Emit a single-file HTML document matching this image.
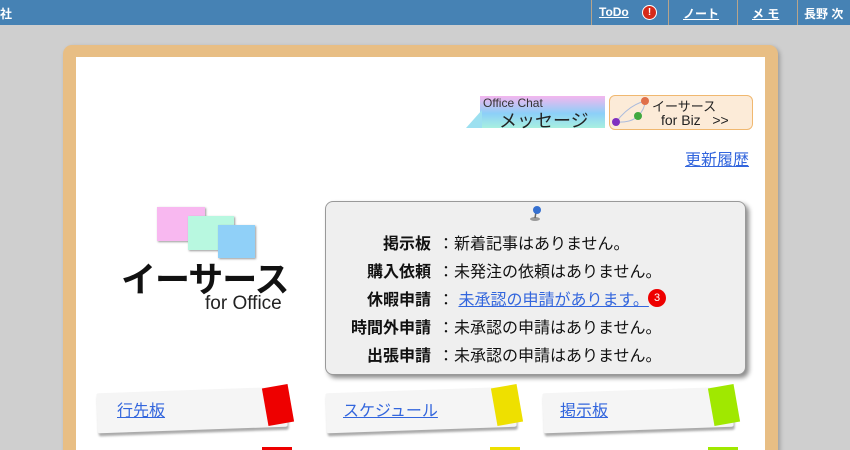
<!DOCTYPE html>
<html style="width:850px;height:450px;overflow:hidden"><head><meta charset="utf-8"><style>
*{margin:0;padding:0;box-sizing:border-box}
body{width:850px;height:450px;overflow:hidden;background:#cfcfcf;font-family:"Liberation Sans","Noto Sans CJK JP",sans-serif;position:relative}
.top{position:absolute;left:0;top:0;width:850px;height:25px;background:#4682b4;color:#fff;font-size:12px;font-weight:bold}
.top span{position:absolute;top:5px}
.sep{position:absolute;top:0;width:1px;height:25px;background:#b8a48a}
.frame{position:absolute;left:63px;top:45px;width:715px;height:420px;background:#e8be84;border-radius:9px;box-shadow:2px 2px 4px rgba(0,0,0,.25)}
.inner{position:absolute;left:76px;top:57px;width:689px;height:400px;background:#fff}
a{color:#3366dd;text-decoration:underline}
.panel{position:absolute;left:325px;top:201px;width:421px;height:174px;background:#efefef;border:1px solid #999;border-radius:8px;box-shadow:3px 3px 5px rgba(0,0,0,.45)}
.row{position:absolute;left:0;font-size:16px;color:#111;white-space:nowrap}
.row b{position:absolute;right:-105px;width:200px;text-align:right;font-weight:bold}
.tab{position:absolute;width:196px;height:44px}
.tab .b{position:absolute;left:0;top:4px;width:190px;height:40px;background:#f5f5f5;border-radius:2px;box-shadow:1px 3px 2px #aaa;transform:rotate(-2deg)}
.tab a{position:absolute;left:20px;top:11px;font-size:16px}
.tab .c{position:absolute;right:2px;top:0;width:26px;height:38px;transform:rotate(-10deg)}
</style></head><body>
<div class="top">
<span style="left:0">社</span>
<div class="sep" style="left:591px"></div>
<span style="left:599px;text-decoration:underline">ToDo</span>
<span style="left:642px;top:5px;width:15px;height:15px;border-radius:50%;background:#d52a1a;border:1px solid #fff;text-align:center;font-size:10px;line-height:13px">!</span>
<div class="sep" style="left:668px"></div>
<span style="left:683px;text-decoration:underline">ノート</span>
<div class="sep" style="left:737px"></div>
<span style="left:752px;text-decoration:underline">メ モ</span>
<div class="sep" style="left:797px"></div>
<span style="left:804px">長野 次</span>
</div>
<div class="frame"></div>
<div class="inner"></div>

<div style="position:absolute;left:480px;top:96px;width:125px;height:32px;background:linear-gradient(#f4b6ee,#8cd0f8 55%,#a8f0e0)"></div>
<div style="position:absolute;left:466px;top:110px;width:0;height:0;border-top:18px solid transparent;border-right:16px solid #9ce0f0"></div>
<div style="position:absolute;left:483px;top:96px;font-size:12px;color:#333">Office Chat</div>
<div style="position:absolute;left:499px;top:107px;font-size:18px;color:#222">メッセージ</div>
<div style="position:absolute;left:609px;top:95px;width:144px;height:35px;background:#fcebd8;border:1px solid #f0b870;border-radius:6px"></div>
<svg style="position:absolute;left:609px;top:95px" width="50" height="35"><path d="M7 27 Q20 10 36 6 M7 27 Q22 28 29 21 Q36 14 36 6" stroke="#aabbdd" fill="none"/><circle cx="36" cy="6" r="4" fill="#e0704a"/><circle cx="29" cy="21" r="4" fill="#40a840"/><circle cx="7" cy="27" r="4" fill="#8030c0"/></svg>
<div style="position:absolute;left:652px;top:96px;font-size:13px;color:#222">イーサース</div>
<div style="position:absolute;left:661px;top:112px;font-size:14px;color:#222">for Biz &nbsp;&nbsp;&gt;&gt;</div>
<a style="position:absolute;left:685px;top:146px;font-size:16px">更新履歴</a>

<div style="position:absolute;left:157px;top:207px;width:48px;height:34px;background:#f8b8f0;box-shadow:1px 1px 2px #999"></div>
<div style="position:absolute;left:188px;top:216px;width:46px;height:34px;background:#b8f8e0;box-shadow:1px 1px 2px #999"></div>
<div style="position:absolute;left:218px;top:225px;width:37px;height:33px;background:#90d0f8;box-shadow:1px 1px 2px #999"></div>
<div style="position:absolute;left:121px;top:252px;font-size:35px;font-weight:bold;color:#111;letter-spacing:-1px">イーサース</div>
<div style="position:absolute;left:205px;top:293px;font-size:19px;color:#222">for Office</div>

<div class="panel">
<svg style="position:absolute;left:203px;top:2px" width="14" height="18"><ellipse cx="6" cy="15" rx="5" ry="2" fill="#999"/><path d="M6 14 L7 8" stroke="#666" stroke-width="1.5"/><circle cx="8" cy="6" r="4" fill="#3570d0"/></svg>
<div class="row" style="top:28px;left:0"><b>掲示板</b></div>
<div class="row" style="top:56px"><b>購入依頼</b></div>
<div class="row" style="top:84px"><b>休暇申請</b></div>
<div class="row" style="top:112px"><b>時間外申請</b></div>
<div class="row" style="top:140px"><b>出張申請</b></div>
<div class="row" style="left:112px;top:28px">：新着記事はありません。</div>
<div class="row" style="left:112px;top:56px">：未発注の依頼はありません。</div>
<div class="row" style="left:112px;top:84px">：&nbsp;<a>未承認の申請があります。</a></div>
<div class="row" style="left:322px;top:87px;width:18px;height:18px;border-radius:50%;background:#e00;color:#fff;font-size:11px;text-align:center;line-height:18px">3</div>
<div class="row" style="left:112px;top:112px">：未承認の申請はありません。</div>
<div class="row" style="left:112px;top:140px">：未承認の申請はありません。</div>
</div>

<div class="tab" style="left:97px;top:386px"><div class="b"></div><div class="c" style="background:#e00"></div><a>行先板</a></div>
<div class="tab" style="left:326px;top:386px"><div class="b"></div><div class="c" style="background:#eee000"></div><a style="left:17px">スケジュール</a></div>
<div class="tab" style="left:543px;top:386px"><div class="b"></div><div class="c" style="background:#a0e800"></div><a style="left:17px">掲示板</a></div>
<div style="position:absolute;left:262px;top:447px;width:30px;height:3px;background:#e00"></div>
<div style="position:absolute;left:490px;top:447px;width:30px;height:3px;background:#eee000"></div>
<div style="position:absolute;left:708px;top:447px;width:30px;height:3px;background:#a0e800"></div>
</body></html>
